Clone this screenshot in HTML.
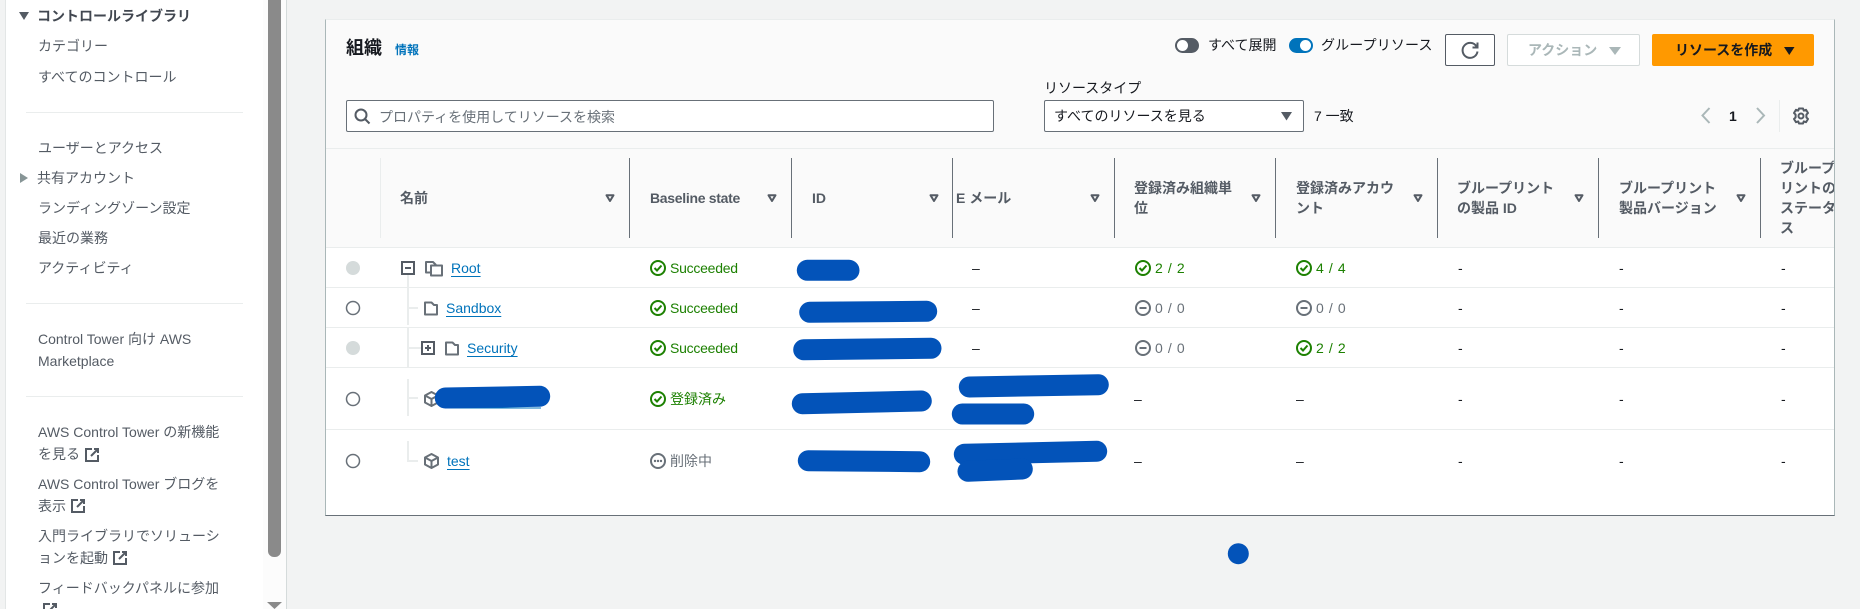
<!DOCTYPE html>
<html lang="ja">
<head>
<meta charset="utf-8">
<title>組織</title>
<style>
html,body{margin:0;padding:0;width:1860px;height:609px;overflow:hidden;background:#f2f3f3}
body{position:relative;font-family:"Liberation Sans","Noto Sans CJK JP",sans-serif;font-size:14px;color:#16191f}
.t{position:absolute;white-space:nowrap;line-height:20px;font-size:14px}
.box{position:absolute;box-sizing:border-box}
.n{color:#545b64}
.h{color:#545b64;font-weight:700}
.l{color:#0073bb;text-decoration:underline;text-underline-offset:3px}
.g{color:#1d8102}
.m{color:#687078}
.c{letter-spacing:.6px}
svg{position:absolute;left:0;top:0}
</style>
</head>
<body>
<!-- sidebar -->
<div class="box" style="left:5px;top:0;width:282px;height:609px;background:#fff;border-left:1px solid #e3e6e6;border-right:1px solid #d5dbdb"></div>
<div class="box" style="left:263px;top:0;width:23px;height:609px;background:#fcfcfc"></div>
<div class="box" style="left:268px;top:-10px;width:13px;height:567px;background:#8a8a8a;border-radius:0 0 6px 6px"></div>
<div class="box" style="left:26px;top:112px;width:217px;height:1px;background:#eaeded"></div>
<div class="box" style="left:26px;top:303px;width:217px;height:1px;background:#eaeded"></div>
<div class="box" style="left:26px;top:396px;width:217px;height:1px;background:#eaeded"></div>

<div class="t" style="left:37px;top:6px;font-weight:700;color:#414750">コントロールライブラリ</div>
<div class="t n" style="left:38px;top:36px">カテゴリー</div>
<div class="t n" style="left:38px;top:67px">すべてのコントロール</div>
<div class="t n" style="left:38px;top:138px">ユーザーとアクセス</div>
<div class="t n" style="left:37px;top:168px">共有アカウント</div>
<div class="t n" style="left:38px;top:198px">ランディングゾーン設定</div>
<div class="t n" style="left:38px;top:228px">最近の業務</div>
<div class="t n" style="left:38px;top:258px">アクティビティ</div>
<div class="t n" style="left:38px;top:329px">Control Tower 向け AWS</div>
<div class="t n" style="left:38px;top:351px">Marketplace</div>
<div class="t n" style="left:38px;top:422px">AWS Control Tower の新機能</div>
<div class="t n" style="left:38px;top:444px">を見る</div>
<div class="t n" style="left:38px;top:474px">AWS Control Tower ブログを</div>
<div class="t n" style="left:38px;top:496px">表示</div>
<div class="t n" style="left:38px;top:526px">入門ライブラリでソリューシ</div>
<div class="t n" style="left:38px;top:548px">ョンを起動</div>
<div class="t n" style="left:38px;top:578px">フィードバックパネルに参加</div>

<!-- panel -->
<div class="box" style="left:325px;top:19px;width:1510px;height:497px;background:#fff;border:1px solid #eaeded;border-left:1px solid #aab7b8;border-right:1px solid #aab7b8;border-bottom:1px solid #687078"></div>
<div class="box" style="left:326px;top:20px;width:1508px;height:228px;background:#fafafa;border-bottom:1px solid #eaeded"></div>
<div class="box" style="left:326px;top:148px;width:1508px;height:1px;background:#eaeded"></div>
<div class="box" style="left:326px;top:287px;width:1508px;height:1px;background:#eaeded"></div>
<div class="box" style="left:326px;top:327px;width:1508px;height:1px;background:#eaeded"></div>
<div class="box" style="left:326px;top:367px;width:1508px;height:1px;background:#eaeded"></div>
<div class="box" style="left:326px;top:429px;width:1508px;height:1px;background:#eaeded"></div>

<div class="t" style="left:346px;top:38px;font-size:18px;font-weight:700;color:#16191f">組織</div>
<div class="t" style="left:395px;top:40px;font-size:12px;font-weight:700;color:#0073bb">情報</div>

<div class="t" style="left:1208px;top:35px;color:#16191f">すべて展開</div>
<div class="t" style="left:1321px;top:35px;color:#16191f;letter-spacing:.15px">グループリソース</div>

<div class="box" style="left:1445px;top:34px;width:50px;height:32px;background:#fff;border:1px solid #545b64;border-radius:2px"></div>
<div class="box" style="left:1507px;top:34px;width:133px;height:32px;background:#fff;border:1px solid #d5dbdb;border-radius:2px"></div>
<div class="t" style="left:1528px;top:40px;font-weight:700;color:#aab7b8">アクション</div>
<div class="box" style="left:1652px;top:34px;width:162px;height:32px;background:#ff9900;border-radius:2px"></div>
<div class="t" style="left:1675px;top:40px;font-weight:700;color:#16191f">リソースを作成</div>

<div class="box" style="left:346px;top:100px;width:648px;height:32px;background:#fff;border:1px solid #687078;border-radius:2px"></div>
<div class="t m" style="left:379px;top:107px">プロパティを使用してリソースを検索</div>

<div class="t" style="left:1044px;top:78px;color:#16191f">リソースタイプ</div>
<div class="box" style="left:1044px;top:100px;width:260px;height:32px;background:#fff;border:1px solid #687078;border-radius:2px"></div>
<div class="t" style="left:1054px;top:106px;color:#16191f">すべてのリソースを見る</div>
<div class="t" style="left:1314px;top:106px;color:#16191f">7 一致</div>
<div class="t" style="left:1729px;top:106px;font-weight:700;color:#16191f">1</div>

<!-- table header -->
<div class="t h" style="left:400px;top:188px">名前</div>
<div class="t h" style="left:650px;top:188px;letter-spacing:-.3px">Baseline state</div>
<div class="t h" style="left:812px;top:188px">ID</div>
<div class="t h" style="left:956px;top:188px">E メール</div>
<div class="t h" style="left:1134px;top:178px">登録済み組織単<br>位</div>
<div class="t h" style="left:1296px;top:178px">登録済みアカウ<br>ント</div>
<div class="t h" style="left:1457px;top:178px">ブループリント<br>の製品 ID</div>
<div class="t h" style="left:1619px;top:178px">ブループリント<br>製品バージョン</div>
<div class="box" style="left:1761px;top:158px;width:73px;height:80px;overflow:hidden">
  <div class="t h" style="left:19px;top:0">ブループ<br>リントの<br>ステータ<br>ス</div>
</div>

<!-- rows: names -->
<div class="t l" style="left:451px;top:258px">Root</div>
<div class="t l" style="left:446px;top:298px">Sandbox</div>
<div class="t l" style="left:467px;top:338px">Security</div>
<div class="t l" style="left:447px;top:451px">test</div>

<!-- status -->
<div class="t g" style="left:670px;top:258px;letter-spacing:-.25px">Succeeded</div>
<div class="t g" style="left:670px;top:298px;letter-spacing:-.25px">Succeeded</div>
<div class="t g" style="left:670px;top:338px;letter-spacing:-.25px">Succeeded</div>
<div class="t g" style="left:670px;top:389px">登録済み</div>
<div class="t m" style="left:670px;top:451px">削除中</div>

<!-- email dash -->
<div class="t" style="left:972px;top:258px">–</div>
<div class="t" style="left:972px;top:298px">–</div>
<div class="t" style="left:972px;top:338px">–</div>

<!-- counts -->
<div class="t g c" style="left:1155px;top:258px">2 / 2</div>
<div class="t m c" style="left:1155px;top:298px">0 / 0</div>
<div class="t m c" style="left:1155px;top:338px">0 / 0</div>
<div class="t" style="left:1134px;top:389px">–</div>
<div class="t" style="left:1134px;top:451px">–</div>
<div class="t g c" style="left:1316px;top:258px">4 / 4</div>
<div class="t m c" style="left:1316px;top:298px">0 / 0</div>
<div class="t g c" style="left:1316px;top:338px">2 / 2</div>
<div class="t" style="left:1296px;top:389px">–</div>
<div class="t" style="left:1296px;top:451px">–</div>

<!-- hyphen columns -->
<div class="t" style="left:1458px;top:258px">-</div><div class="t" style="left:1619px;top:258px">-</div><div class="t" style="left:1781px;top:258px">-</div>
<div class="t" style="left:1458px;top:298px">-</div><div class="t" style="left:1619px;top:298px">-</div><div class="t" style="left:1781px;top:298px">-</div>
<div class="t" style="left:1458px;top:338px">-</div><div class="t" style="left:1619px;top:338px">-</div><div class="t" style="left:1781px;top:338px">-</div>
<div class="t" style="left:1458px;top:389px">-</div><div class="t" style="left:1619px;top:389px">-</div><div class="t" style="left:1781px;top:389px">-</div>
<div class="t" style="left:1458px;top:451px">-</div><div class="t" style="left:1619px;top:451px">-</div><div class="t" style="left:1781px;top:451px">-</div>

<svg width="1860" height="609" viewBox="0 0 1860 609" fill="none">
  <defs>
    <g id="ok"><circle r="7" stroke="#1d8102" stroke-width="2"/><path d="M-3.5 0L-1 2.5L3.5-2.5" stroke="#1d8102" stroke-width="2"/></g>
    <g id="no"><circle r="7" stroke="#687078" stroke-width="2"/><path d="M-3.5 0H3.5" stroke="#687078" stroke-width="2"/></g>
    <g id="ext" stroke="#545b64" stroke-width="2"><path d="M7 1H1V13H13V7"/><path d="M6 8L13 1M9 1H13V5"/></g>
    <path id="folder" d="M1 1.500H7.500L10 4H13V13.500H1Z" stroke="#687078" stroke-width="2" stroke-linejoin="round"/>
    <g id="cube" stroke="#687078" stroke-width="2" stroke-linejoin="round"><path d="M7.500 1L14 4.500V11.500L7.500 15L1 11.500V4.500Z"/><path d="M1 4.500L7.500 8L14 4.500M7.500 8V15"/></g>
    <path id="sort" d="M-3.500-2.800H3.500L0 3Z" stroke="#545b64" stroke-width="2" stroke-linejoin="round" fill="none"/>
  </defs>

  <!-- sidebar icons -->
  <path d="M19 12H29L24 20Z" fill="#545b64"/>
  <path d="M20 173V183L28 178Z" fill="#879596"/>
  <use href="#ext" x="85" y="448"/>
  <use href="#ext" x="71" y="499"/>
  <use href="#ext" x="113" y="551"/>
  <use href="#ext" x="43" y="603"/>
  <path d="M267 602H282L274.500 609Z" fill="#8a8a8a"/>

  <!-- toggles -->
  <rect x="1175" y="38" width="24" height="15" rx="7.500" fill="#545b64"/>
  <circle cx="1182.500" cy="45.500" r="5.500" fill="#fff"/>
  <rect x="1289" y="38" width="24" height="15" rx="7.500" fill="#0073bb"/>
  <circle cx="1305.500" cy="45.500" r="5.500" fill="#fff"/>

  <!-- refresh -->
  <path d="M1476.500 46.500A7.500 7.500 0 1 0 1477.500 51.500" stroke="#545b64" stroke-width="2"/>
  <path d="M1477.500 42.500V47.500H1472.500" stroke="#545b64" stroke-width="2"/>

  <!-- button carets -->
  <path d="M1609 47H1621L1615 55Z" fill="#aab7b8"/>
  <path d="M1784 47H1794.500L1789.250 55Z" fill="#16191f"/>

  <!-- search -->
  <circle cx="361" cy="115" r="5.500" stroke="#545b64" stroke-width="2"/>
  <path d="M365 119L369.500 123.500" stroke="#545b64" stroke-width="2"/>

  <!-- select caret -->
  <path d="M1281 112H1292L1286.500 120.500Z" fill="#545b64"/>

  <!-- pagination -->
  <path d="M1709.500 108L1702.500 115.500L1709.500 123" stroke="#aab7b8" stroke-width="2"/>
  <path d="M1757 108L1764 115.500L1757 123" stroke="#aab7b8" stroke-width="2"/>
  <path d="M1779.500 100V132" stroke="#eaeded"/>
  <g transform="translate(1801 116)" stroke="#545b64" stroke-width="2">
    <circle r="2.500"/>
    <path d="M-2-7.500H2L2.800-5.400L5-6.200L7-3L5.400-1.400V1.400L7 3L5 6.200L2.800 5.400L2 7.500H-2L-2.800 5.400L-5 6.200L-7 3L-5.400 1.400V-1.400L-7-3L-5-6.200L-2.800-5.400Z" stroke-linejoin="round"/>
  </g>

  <!-- header dividers -->
  <path d="M380.500 158V238" stroke="#eaeded"/>
  <g stroke="#687078">
    <path d="M629.500 158V238M791.500 158V238M952.500 158V238M1114.500 158V238M1275.500 158V238M1437.500 158V238M1598.500 158V238M1760.500 158V238"/>
  </g>
  <use href="#sort" x="610" y="198"/>
  <use href="#sort" x="772" y="198"/>
  <use href="#sort" x="934" y="198"/>
  <use href="#sort" x="1095" y="198"/>
  <use href="#sort" x="1256" y="198"/>
  <use href="#sort" x="1418" y="198"/>
  <use href="#sort" x="1579" y="198"/>
  <use href="#sort" x="1741" y="198"/>

  <!-- radios -->
  <circle cx="353" cy="268" r="7" fill="#d5dbdb"/>
  <circle cx="353" cy="308" r="6.500" stroke="#687078" stroke-width="1.500" fill="#fff"/>
  <circle cx="353" cy="348" r="7" fill="#d5dbdb"/>
  <circle cx="353" cy="399" r="6.500" stroke="#687078" stroke-width="1.500" fill="#fff"/>
  <circle cx="353" cy="461" r="6.500" stroke="#687078" stroke-width="1.500" fill="#fff"/>

  <!-- tree lines -->
  <g stroke="#eaeded" stroke-width="2">
    <path d="M408 275V325M409 308H418"/>
    <path d="M408 328V367M409 348H421"/>
    <path d="M408 379V416M409 398H418"/>
    <path d="M408 441V461H418"/>
  </g>

  <!-- tree icons -->
  <rect x="402" y="262" width="12" height="12" stroke="#545b64" stroke-width="2"/>
  <path d="M405 268H411" stroke="#545b64" stroke-width="2"/>
  <path d="M431 272.500H426V262H433L436 265" stroke="#687078" stroke-width="2" stroke-linejoin="round"/>
  <path d="M431 265.500H442V275.500H431Z" stroke="#687078" stroke-width="2" stroke-linejoin="round"/>
  <use href="#folder" x="424" y="301"/>
  <rect x="422" y="342" width="12" height="12" stroke="#545b64" stroke-width="2"/>
  <path d="M425 348H431M428 345V351" stroke="#545b64" stroke-width="2"/>
  <use href="#folder" x="445" y="341"/>
  <use href="#cube" x="424" y="391"/>
  <use href="#cube" x="424" y="453"/>

  <!-- status icons -->
  <use href="#ok" x="658" y="268"/>
  <use href="#ok" x="658" y="308"/>
  <use href="#ok" x="658" y="348"/>
  <use href="#ok" x="658" y="399"/>
  <g transform="translate(658 461)"><circle r="7" stroke="#687078" stroke-width="2"/><circle cx="-3" r="1.200" fill="#687078"/><circle r="1.200" fill="#687078"/><circle cx="3" r="1.200" fill="#687078"/></g>
  <use href="#ok" x="1143" y="268"/>
  <use href="#no" x="1143" y="308"/>
  <use href="#no" x="1143" y="348"/>
  <use href="#ok" x="1304" y="268"/>
  <use href="#no" x="1304" y="308"/>
  <use href="#ok" x="1304" y="348"/>

  <!-- underline under redaction -->
  <path d="M445 408H541" stroke="#0073bb"/>

  <!-- redactions -->
  <g stroke="#0353b9" stroke-width="21" stroke-linecap="round">
    <path d="M445.300 398L539.700 396.300"/>
    <path d="M807.300 270.300H849"/>
    <path d="M809.700 312.300L926.700 311.300"/>
    <path d="M803.700 349.700L931 348.300"/>
    <path d="M802.300 403.700L921.300 401"/>
    <path d="M808.300 460.700L919.700 461.700"/>
    <path d="M969.300 387L1098.300 384.700"/>
    <path d="M962.300 414H1023.700"/>
    <path d="M964.300 454.300L1096.700 451.300"/>
    <path d="M968 471.300L1022.300 469"/>
  </g>
  <circle cx="1238.300" cy="553.700" r="10.500" fill="#0353b9"/>
</svg>
</body>
</html>
